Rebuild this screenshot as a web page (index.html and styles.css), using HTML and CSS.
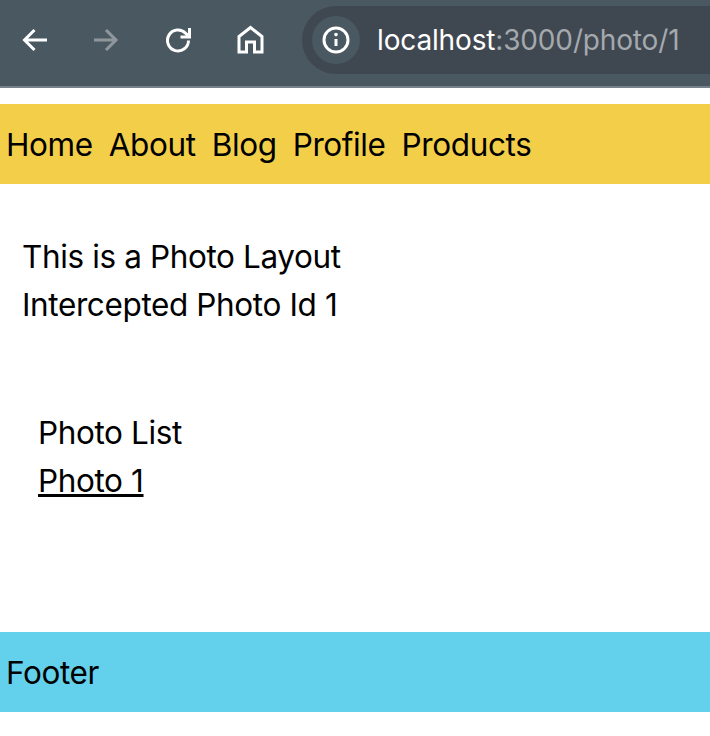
FILE: index.html
```html
<!DOCTYPE html>
<html lang="en">
<head>
<meta charset="utf-8">
<title>localhost:3000/photo/1</title>
<link rel="stylesheet" href="styles.css">
</head>
<body>
<header class="chrome">
  <div class="tools">
    <svg class="tool" viewBox="0 0 28 28"><path d="M26 14H3.5M13.5 4 3.5 14l10 10" /></svg>
    <svg class="tool dim" viewBox="0 0 28 28"><path d="M1 14h22M13 4l10 10-10 10" /></svg>
    <svg class="tool" viewBox="0 0 28 28"><path d="M23.5 14.5a10.5 10.5 0 1 1-3-7.4L24 10.5M24.5 2v9h-9" /></svg>
    <svg class="tool" viewBox="0 0 28 28"><path d="M13.5 1.5 2 10.5v15.5h7.5v-10h8v10h7.5V10.5z" /></svg>
  </div>
  <div class="omnibox">
    <span class="site-info"><svg class="info" viewBox="0 0 28 28"><circle cx="14" cy="14" r="12" /><path class="info-stem" d="M14 13v7" /><circle class="info-dot" cx="14" cy="8.6" r="1.8" /></svg></span>
    <span class="url">localhost<span class="url-rest">:3000/photo/1</span></span>
  </div>
</header>
<nav class="nav">
  <a href="#">Home</a>
  <a href="#">About</a>
  <a href="#">Blog</a>
  <a href="#">Profile</a>
  <a href="#">Products</a>
</nav>
<main class="main">
  <section class="layout">
    <p>This is a Photo Layout</p>
    <p>Intercepted Photo Id 1</p>
  </section>
  <section class="list">
    <p>Photo List</p>
    <a class="photo-link" href="#">Photo 1</a>
  </section>
</main>
<footer class="footer">Footer</footer>
</body>
</html>
```
FILE: styles.css
```css
* { box-sizing: border-box; }
html, body { margin: 0; padding: 0; background: #fff; }
body { width: 710px; height: 736px; overflow: hidden; font-family: Inter, "Liberation Sans", sans-serif; font-size: 31.5px; letter-spacing: -0.38px; line-height: 48px; color: #000; }
p { margin: 0; }
a { color: inherit; text-decoration: none; }
.chrome { height: 88px; background: #4a5862; border-bottom: 2px solid #76818a; display: flex; align-items: flex-start; padding: 6px 0 0 21px; overflow: hidden; margin-bottom: 16px; letter-spacing: normal; }
.tools { display: flex; gap: 44px; padding-top: 20px; margin-right: 37px; flex: none; }
.tool { width: 28px; height: 28px; fill: none; stroke: #fff; stroke-width: 3; display: block; overflow: visible; }
.tool.dim { stroke: #8f979d; }
.omnibox { flex: none; width: 460px; height: 68px; background: #3f4750; border-radius: 34px; display: flex; align-items: center; padding-left: 10px; }
.site-info { width: 48px; height: 48px; border-radius: 50%; background: #4a5862; display: flex; align-items: center; justify-content: center; margin-right: 17px; flex: none; }
.info { width: 28px; height: 28px; display: block; fill: none; stroke: #fff; stroke-width: 3; }
.info-dot { fill: #fff; stroke: none; }
.url { font-size: 28px; letter-spacing: -0.15px; line-height: 36px; color: #fff; white-space: nowrap; }
.url-rest { color: #a4a9ae; }
.nav { height: 80px; background: #f3ce49; display: flex; align-items: center; gap: 16px; padding: 2px 6px 0; }
.main { height: 448px; padding: 49px 22px 0; }
.list { margin-top: 80px; padding-left: 16px; }
.photo-link { text-decoration: underline; }
.footer { height: 80px; background: #63d0ec; display: flex; align-items: center; padding: 2px 6px 0; }
```
